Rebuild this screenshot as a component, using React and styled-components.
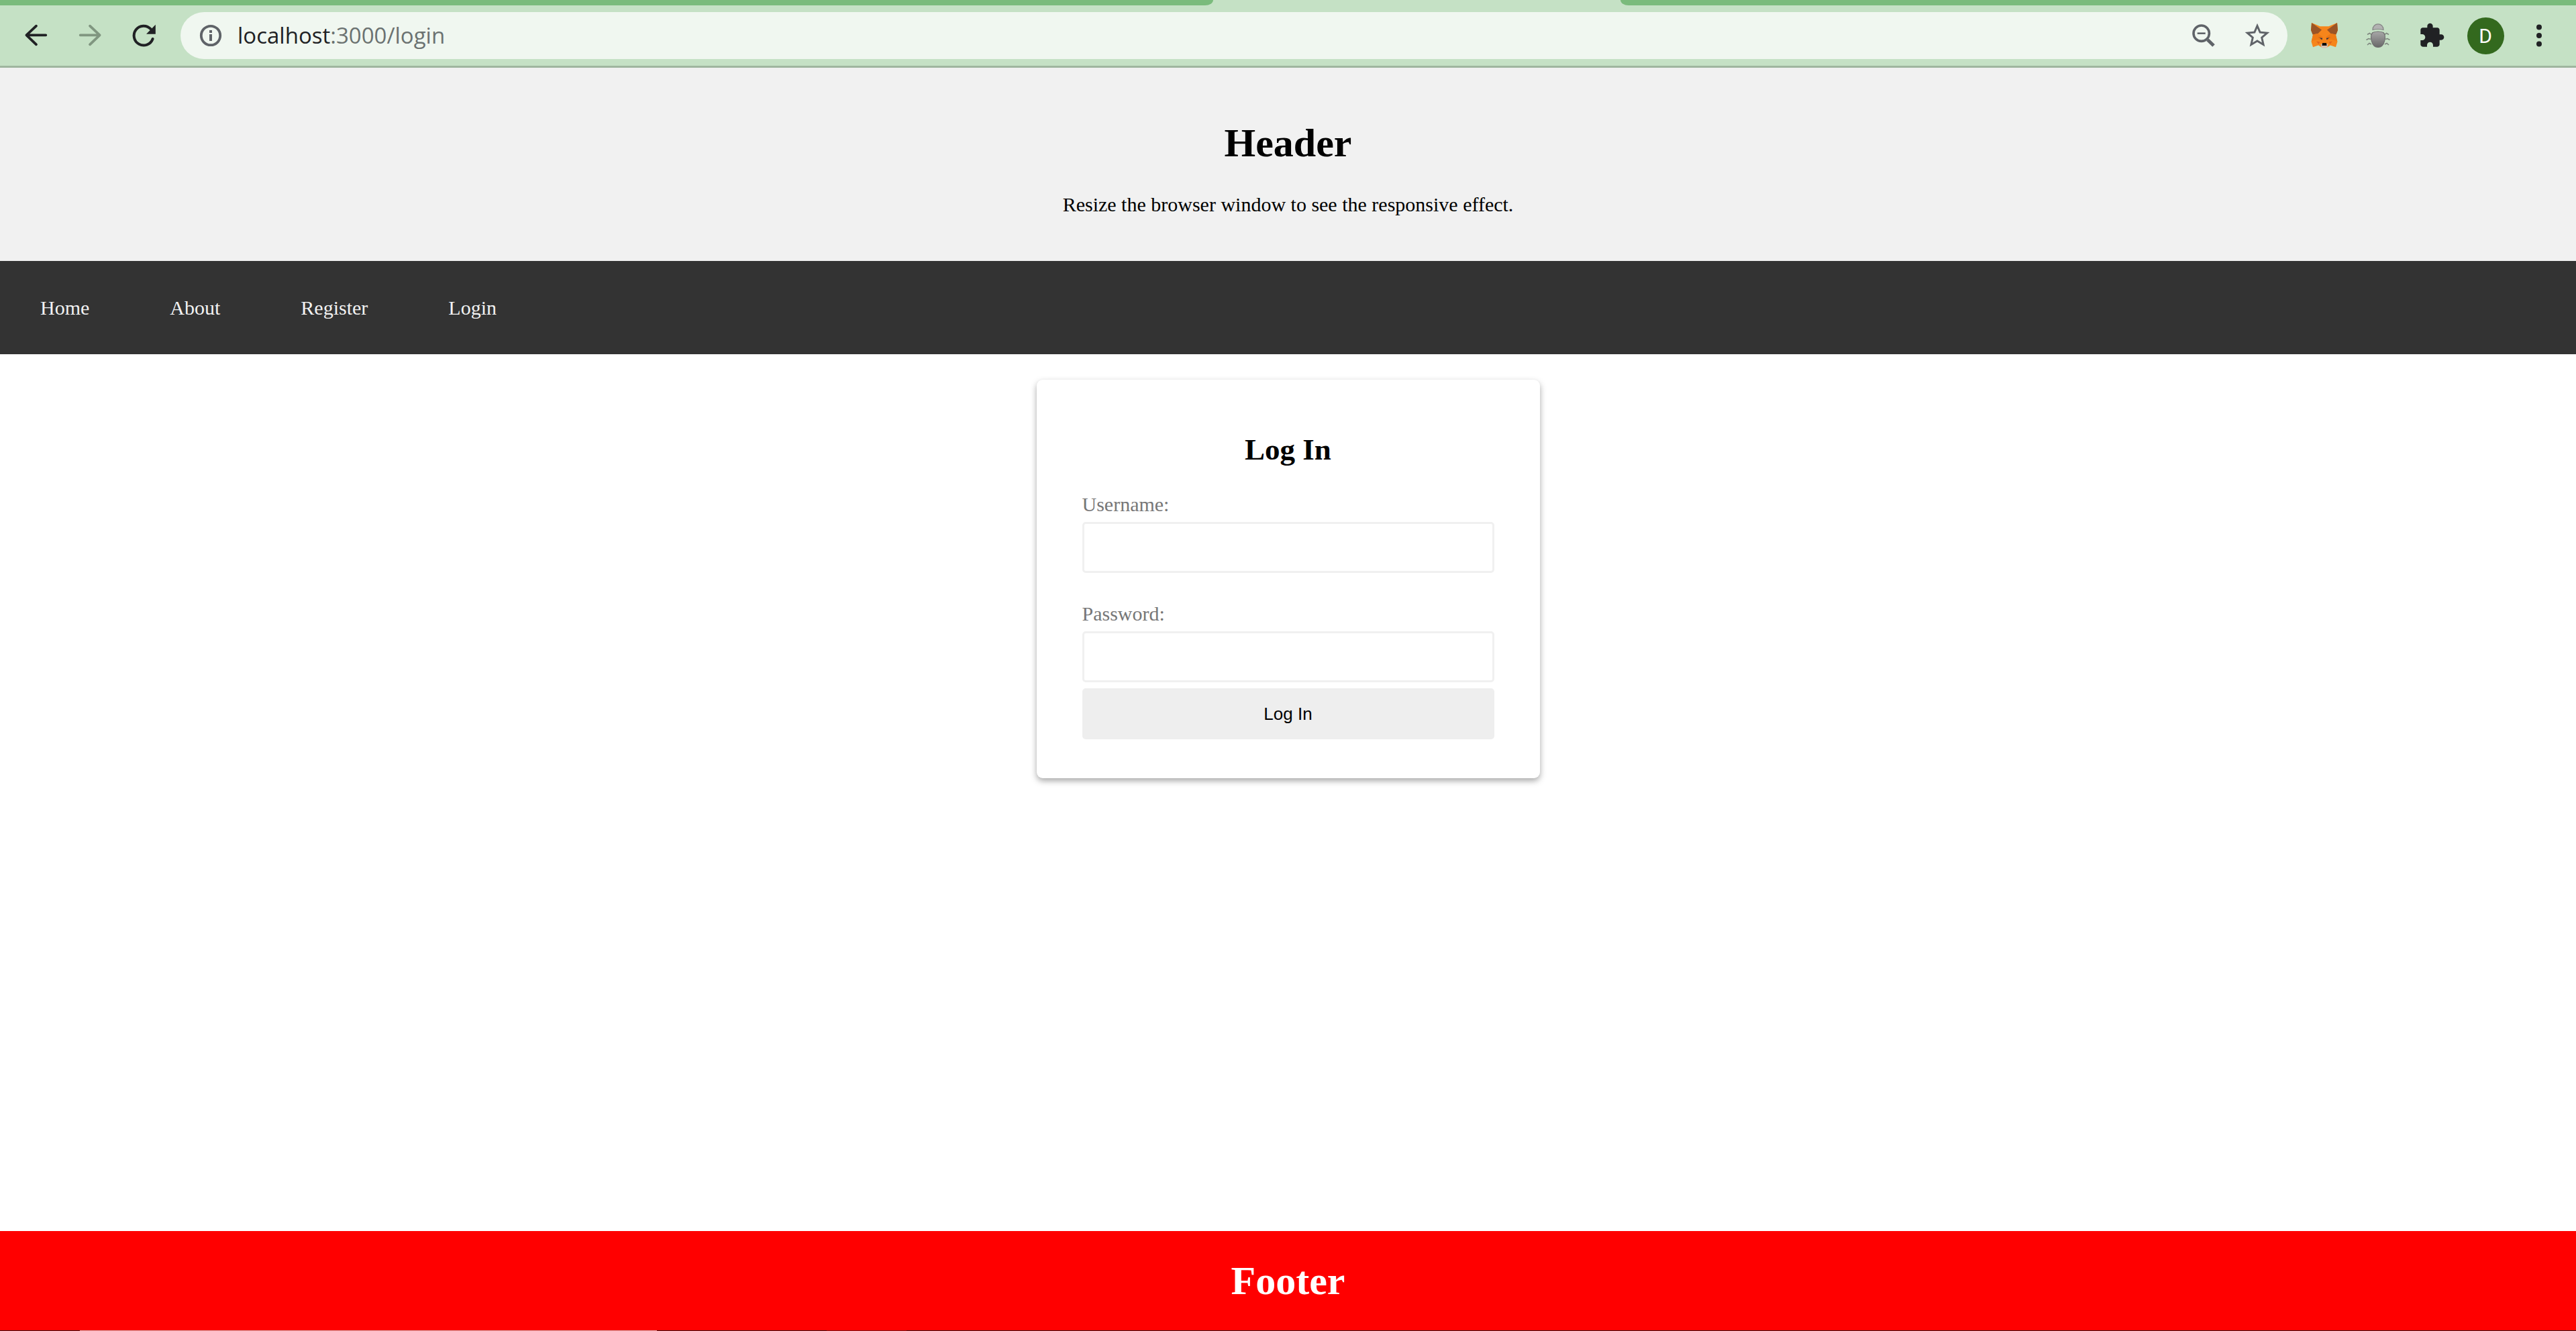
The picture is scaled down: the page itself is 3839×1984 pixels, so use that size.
import React from "react";
import styled, { createGlobalStyle } from "styled-components";

const serif = `"Liberation Serif", "Times New Roman", serif`;
const sans = `"Liberation Sans", Arial, sans-serif`;
const chromeFont = `"Open Sans", "Noto Sans", sans-serif`;

const GlobalStyle = createGlobalStyle`
  *, *::before, *::after { box-sizing: border-box; }
  body {
    margin: 0;
    background: #fff;
    color: #000;
    font-family: ${serif};
    font-size: 30px;
    line-height: 35px;
  }
`;

const Screen = styled.div`
  display: flex;
  flex-direction: column;
  min-height: 100vh;
`;

/* Browser chrome */

const TabStrip = styled.div`
  display: flex;
  justify-content: space-between;
  height: 8px;
  background: #c5e1c5;
`;

const TabStripSide = styled.div`
  width: ${(p) => p.$width};
  background: #7abb7c;
  border-radius: ${(p) => (p.$side === "left" ? "0 0 12px 0 / 0 0 8px 0" : "0 0 0 12px / 0 0 0 8px")};
`;

const Toolbar = styled.div`
  display: flex;
  align-items: center;
  gap: 25px;
  padding: 10px 25px 10px 24px;
  background: #c5e1c5;
  border-bottom: 3px solid #9fb69f;
`;

const ButtonGroup = styled.div`
  display: flex;
  align-items: center;
  gap: 20px;
`;

const IconButton = styled.button`
  display: flex;
  align-items: center;
  justify-content: center;
  width: 60px;
  height: 60px;
  padding: 0;
  border: 0;
  border-radius: 50%;
  background: transparent;
  color: ${(p) => p.$color || "#202124"};
`;

const AddressBar = styled.div`
  display: flex;
  flex: 1;
  align-items: center;
  min-width: 0;
  height: 70px;
  padding: 0 15px;
  border-radius: 35px;
  background: #f0f7f0;
`;

const AddressField = styled.div`
  display: grid;
  flex: 1;
  align-items: center;
  min-width: 0;
  padding: 0 10px;
  font-family: ${chromeFont};
  font-size: 33px;
  line-height: 46px;
`;

const AddressInput = styled.input`
  grid-area: 1 / 1;
  width: 100%;
  padding: 0;
  border: 0;
  outline: 0;
  background: transparent;
  font: inherit;
`;

const AddressText = styled.span`
  grid-area: 1 / 1;
  pointer-events: none;
  color: #6b7271;
`;

const AddressHost = styled.span`
  color: #202124;
`;

const Avatar = styled.span`
  display: flex;
  align-items: center;
  justify-content: center;
  width: 55px;
  height: 55px;
  border-radius: 50%;
  background: #33691e;
  color: #fff;
  font-family: Roboto, sans-serif;
  font-size: 30px;
  line-height: 35px;
`;

/* Page */

const PageHeader = styled.header`
  padding: 38px 38px 37px;
  background: #f1f1f1;
  text-align: center;
`;

const Title = styled.h1`
  margin: 40px 0;
  font-size: 60px;
  line-height: 68px;
`;

const Tagline = styled.p`
  margin: 0 0 30px;
`;

const Nav = styled.nav`
  display: flex;
  background: #333;
`;

const NavLink = styled.a`
  padding: 52px 60px;
  color: #f2f2f2;
  text-decoration: none;
`;

const Main = styled.main`
  display: flex;
  flex: 1;
  justify-content: center;
  align-items: flex-start;
  padding: 38px;
`;

const Card = styled.form`
  width: 100%;
  max-width: 750px;
  padding: 78px 68px 58px;
  border-radius: 9px;
  background: #fff;
  box-shadow: 0 4px 10px rgba(0, 0, 0, 0.35);
`;

const CardTitle = styled.h2`
  margin: 0 0 38px;
  font-size: 45px;
  line-height: 52px;
  text-align: center;
`;

const Field = styled.div`
  display: flex;
  flex-direction: column;
  gap: 9px;
  margin-bottom: ${(p) => p.$space}px;
`;

const Label = styled.label`
  color: #777;
`;

const TextInput = styled.input`
  width: 100%;
  height: 76px;
  padding: 0 20px;
  border: 3px solid #f0f0f0;
  border-radius: 5px;
  background: #fff;
  font-family: ${sans};
  font-size: 25px;
`;

const SubmitButton = styled.button`
  width: 100%;
  height: 76px;
  border: 0;
  border-radius: 5px;
  background: #eee;
  color: #000;
  font-family: ${sans};
  font-size: 26px;
  line-height: 30px;
`;

const PageFooter = styled.footer`
  display: flow-root;
  background: #f00;
  color: #fff;
  text-align: center;
`;

const Taskbar = styled.div`
  display: flex;
  height: 1px;
  background: #3a1c1c;
`;

const TaskbarPart = styled.div`
  width: ${(p) => p.$width};
  background: ${(p) => p.$color};
`;

/* Icons: each is drawn around its own centre */

function Icon({ children, size = 40 }) {
  return (
    <svg width={size} height={size} viewBox="-20 -20 40 40" fill="none" aria-hidden="true">
      {children}
    </svg>
  );
}

function ArrowIcon({ flip }) {
  return (
    <Icon>
      <path
        d="M14.3 -.7H-14.5M0 -14.3L-14.6 -.7L0 13.3"
        stroke="currentColor"
        strokeWidth="3.8"
        strokeLinecap="round"
        strokeLinejoin="round"
        transform={flip ? "scale(-1 1)" : undefined}
      />
    </Icon>
  );
}

function ReloadIcon() {
  return (
    <Icon>
      <path d="M13.6 5A14.4 14.4 0 1 1 10.5 -9.8" stroke="currentColor" strokeWidth="4" strokeLinecap="round" />
      <path d="M17.8 -16.2V-2.3H4Z" fill="currentColor" />
    </Icon>
  );
}

function InfoIcon() {
  return (
    <Icon>
      <circle r="14.2" stroke="currentColor" strokeWidth="3.8" />
      <path d="M-2 -8h4v4h-4zM-2 -2h4v10h-4z" fill="currentColor" />
    </Icon>
  );
}

function ZoomOutIcon() {
  return (
    <Icon>
      <circle cx="-3.3" cy="-3.3" r="11.7" stroke="currentColor" strokeWidth="3.6" />
      <path d="M-9.3 -3.3H2.7" stroke="currentColor" strokeWidth="2.6" />
      <path d="M6 6.2L15 15" stroke="currentColor" strokeWidth="5" />
    </Icon>
  );
}

function StarIcon() {
  return (
    <svg width="44" height="44" viewBox="0 0 24 24" fill="currentColor" aria-hidden="true">
      <path d="M22 9.24l-7.19-.62L12 2 9.19 8.63 2 9.24l5.46 4.73L5.82 21 12 17.27 18.18 21l-1.63-7.03L22 9.24zM12 15.4l-3.76 2.27 1-4.28-3.32-2.88 4.38-.38L12 6.1l1.71 4.04 4.38.38-3.32 2.88 1 4.28L12 15.4z" />
    </svg>
  );
}

function FoxIcon() {
  return (
    <Icon>
      <path d="M-19 -19L-6.5 -13.7H6.5L19 -19L20 -8L17 -1L19.5 9L17 17.3L9 14.5L4 17.5H-4L-9 14.5L-17 17.3L-19.5 9L-17 -1L-20 -8Z" fill="#f6851b" />
      <path d="M-19 -19L-4 -8.5L-9.5 -3L-17.5 -1.5L-20 -8ZM19 -19L4 -8.5L9.5 -3L17.5 -1.5L20 -8Z" fill="#9a5426" />
      <path d="M-17 -1.5L-9.5 -3L-2.5 2L-3.5 7L-10 6L-19 8ZM17 -1.5L9.5 -3L2.5 2L3.5 7L10 6L19 8Z" fill="#ee7a14" />
      <path d="M-9.5 2L-2.8 3.2L-3.4 6.4ZM9.5 2L2.8 3.2L3.4 6.4Z" fill="#c8631a" />
      <path d="M-7 3.6L-3 4L-3.6 6.2ZM7 3.6L3 4L3.6 6.2Z" fill="#233447" />
      <path d="M-12 8.5L-6.5 9.5L-8.5 13ZM12 8.5L6.5 9.5L8.5 13Z" fill="#e2651b" />
      <path d="M-5.5 12.5H5.5L4.5 17L2.5 18.8H-2.5L-4.5 17Z" fill="#d7c1b3" />
      <path d="M-3 11H3L3.6 15H-3.6Z" fill="#0d0d0d" />
    </Icon>
  );
}

function BugIcon() {
  return (
    <Icon>
      <defs>
        <linearGradient id="bugBody" x1="0" y1="0" x2="0" y2="1">
          <stop offset="0" stopColor="#a8a8a8" />
          <stop offset="1" stopColor="#686868" />
        </linearGradient>
      </defs>
      <path d="M-10 -1.5L-12.5 -3.5L-16 -1.5M-11 5.5L-14 4.5L-17.5 6.5M-10 13L-13 11.5L-16 14M10 -1.5L12.5 -3.5L16 -1.5M11 5.5L14 4.5L17.5 6.5M10 13L13 11.5L16 14" stroke="#7d857d" strokeWidth="1.6" />
      <path d="M-8 -8.5C-8 -20 8 -20 8 -8.5Q0 -10.5 -8 -8.5Z" fill="#b2b2b2" stroke="#858585" strokeWidth="1.2" />
      <path d="M-8 -4.5Q0 -7.5 8 -4.5C12.5 0 10.5 17.5 0 17.5S-12.5 0 -8 -4.5Z" fill="url(#bugBody)" stroke="#6d6d6d" strokeWidth="1.2" />
    </Icon>
  );
}

function PuzzleIcon() {
  return (
    <svg width="40" height="40" viewBox="0 0 24 24" fill="currentColor" aria-hidden="true">
      <path d="M20.5 11H19V7c0-1.1-.9-2-2-2h-4V3.5C13 2.12 11.88 1 10.5 1S8 2.12 8 3.5V5H4c-1.1 0-1.99.9-1.99 2v3.8H3.5c1.49 0 2.7 1.21 2.7 2.7s-1.21 2.7-2.7 2.7H2V20c0 1.1.9 2 2 2h3.8v-1.5c0-1.49 1.21-2.7 2.7-2.7 1.49 0 2.7 1.21 2.7 2.7V22H17c1.1 0 2-.9 2-2v-4h1.5c1.38 0 2.5-1.12 2.5-2.5S21.88 11 20.5 11z" />
    </svg>
  );
}

function MenuIcon() {
  return (
    <Icon>
      <g fill="currentColor">
        <circle cy="-12.5" r="4" />
        <circle r="4" />
        <circle cy="12.5" r="4" />
      </g>
    </Icon>
  );
}

function BrowserChrome() {
  return (
    <>
      <TabStrip>
        <TabStripSide $side="left" $width="47.1%" />
        <TabStripSide $side="right" $width="37.1%" />
      </TabStrip>
      <Toolbar>
        <ButtonGroup>
          <IconButton type="button" aria-label="Back"><ArrowIcon /></IconButton>
          <IconButton type="button" aria-label="Forward" $color="#809680"><ArrowIcon flip /></IconButton>
          <IconButton type="button" aria-label="Reload"><ReloadIcon /></IconButton>
        </ButtonGroup>
        <AddressBar>
          <IconButton type="button" aria-label="Site information" $color="#5f6368"><InfoIcon /></IconButton>
          <AddressField>
            <AddressInput type="text" aria-label="Address" />
            <AddressText><AddressHost>localhost</AddressHost>:3000/login</AddressText>
          </AddressField>
          <ButtonGroup>
            <IconButton type="button" aria-label="Zoom" $color="#5f6368"><ZoomOutIcon /></IconButton>
            <IconButton type="button" aria-label="Bookmark" $color="#5f6368"><StarIcon /></IconButton>
          </ButtonGroup>
        </AddressBar>
        <ButtonGroup>
          <IconButton type="button" aria-label="Wallet"><FoxIcon /></IconButton>
          <IconButton type="button" aria-label="Debugger"><BugIcon /></IconButton>
          <IconButton type="button" aria-label="Extensions"><PuzzleIcon /></IconButton>
          <IconButton type="button" aria-label="Profile"><Avatar>D</Avatar></IconButton>
          <IconButton type="button" aria-label="Menu"><MenuIcon /></IconButton>
        </ButtonGroup>
      </Toolbar>
    </>
  );
}

const links = [
  { label: "Home", href: "/" },
  { label: "About", href: "/about" },
  { label: "Register", href: "/register" },
  { label: "Login", href: "/login" },
];

export default function App() {
  return (
    <Screen>
      <GlobalStyle />
      <BrowserChrome />
      <PageHeader>
        <Title>Header</Title>
        <Tagline>Resize the browser window to see the responsive effect.</Tagline>
      </PageHeader>
      <Nav>
        {links.map((link) => (
          <NavLink key={link.label} href={link.href}>{link.label}</NavLink>
        ))}
      </Nav>
      <Main>
        <Card onSubmit={(event) => event.preventDefault()}>
          <CardTitle>Log In</CardTitle>
          <Field $space={43}>
            <Label htmlFor="username">Username:</Label>
            <TextInput id="username" type="text" />
          </Field>
          <Field $space={9}>
            <Label htmlFor="password">Password:</Label>
            <TextInput id="password" type="password" />
          </Field>
          <SubmitButton type="submit">Log In</SubmitButton>
        </Card>
      </Main>
      <PageFooter>
        <Title>Footer</Title>
      </PageFooter>
      <Taskbar>
        <TaskbarPart $width="3.1%" $color="#3a1c1c" />
        <TaskbarPart $width="22.4%" $color="#d0b4b4" />
        <TaskbarPart $width="6.6%" $color="#3a1c1c" />
        <TaskbarPart $width="3.1%" $color="#7a1c1c" />
      </Taskbar>
    </Screen>
  );
}
